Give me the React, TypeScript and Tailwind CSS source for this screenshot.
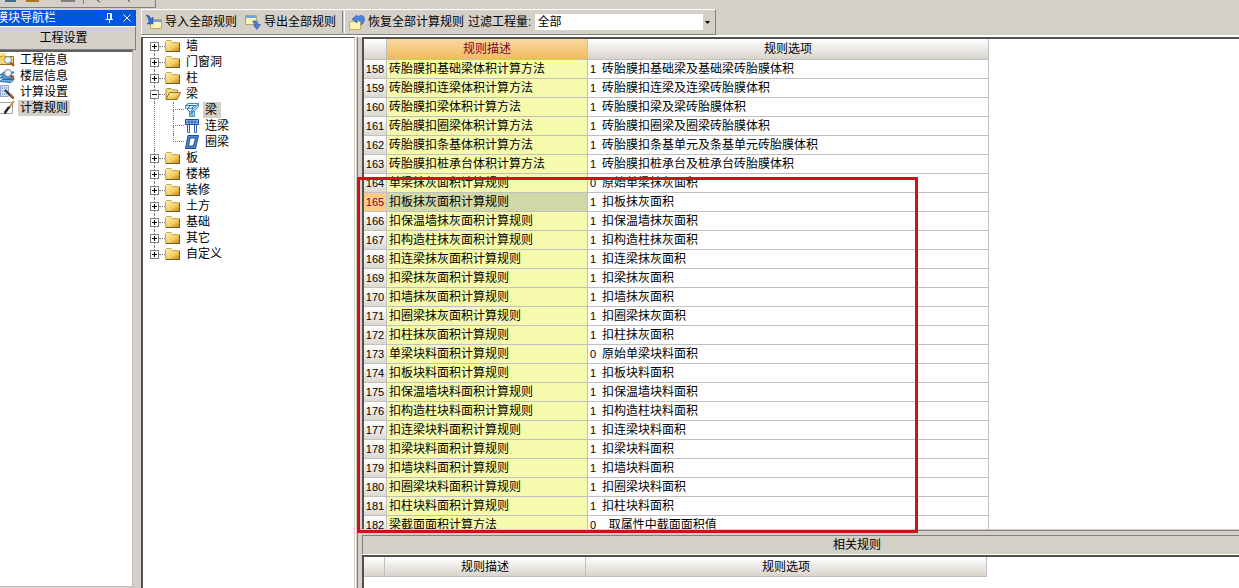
import React from 'react';

interface Rule {
  id: number;
  name: string;
  code: string;
  option: string;
}

interface TreeNode {
  label: string;
  open?: boolean;
}

const rules: Rule[] = [
  { id: 158, name: '砖胎膜扣基础梁体积计算方法', code: '1', option: '砖胎膜扣基础梁及基础梁砖胎膜体积' },
  { id: 159, name: '砖胎膜扣连梁体积计算方法', code: '1', option: '砖胎膜扣连梁及连梁砖胎膜体积' },
  { id: 160, name: '砖胎膜扣梁体积计算方法', code: '1', option: '砖胎膜扣梁及梁砖胎膜体积' },
  { id: 161, name: '砖胎膜扣圈梁体积计算方法', code: '1', option: '砖胎膜扣圈梁及圈梁砖胎膜体积' },
  { id: 162, name: '砖胎膜扣条基体积计算方法', code: '1', option: '砖胎膜扣条基单元及条基单元砖胎膜体积' },
  { id: 163, name: '砖胎膜扣桩承台体积计算方法', code: '1', option: '砖胎膜扣桩承台及桩承台砖胎膜体积' },
  { id: 164, name: '单梁抹灰面积计算规则', code: '0', option: '原始单梁抹灰面积' },
  { id: 165, name: '扣板抹灰面积计算规则', code: '1', option: '扣板抹灰面积' },
  { id: 166, name: '扣保温墙抹灰面积计算规则', code: '1', option: '扣保温墙抹灰面积' },
  { id: 167, name: '扣构造柱抹灰面积计算规则', code: '1', option: '扣构造柱抹灰面积' },
  { id: 168, name: '扣连梁抹灰面积计算规则', code: '1', option: '扣连梁抹灰面积' },
  { id: 169, name: '扣梁抹灰面积计算规则', code: '1', option: '扣梁抹灰面积' },
  { id: 170, name: '扣墙抹灰面积计算规则', code: '1', option: '扣墙抹灰面积' },
  { id: 171, name: '扣圈梁抹灰面积计算规则', code: '1', option: '扣圈梁抹灰面积' },
  { id: 172, name: '扣柱抹灰面积计算规则', code: '1', option: '扣柱抹灰面积' },
  { id: 173, name: '单梁块料面积计算规则', code: '0', option: '原始单梁块料面积' },
  { id: 174, name: '扣板块料面积计算规则', code: '1', option: '扣板块料面积' },
  { id: 175, name: '扣保温墙块料面积计算规则', code: '1', option: '扣保温墙块料面积' },
  { id: 176, name: '扣构造柱块料面积计算规则', code: '1', option: '扣构造柱块料面积' },
  { id: 177, name: '扣连梁块料面积计算规则', code: '1', option: '扣连梁块料面积' },
  { id: 178, name: '扣梁块料面积计算规则', code: '1', option: '扣梁块料面积' },
  { id: 179, name: '扣墙块料面积计算规则', code: '1', option: '扣墙块料面积' },
  { id: 180, name: '扣圈梁块料面积计算规则', code: '1', option: '扣圈梁块料面积' },
  { id: 181, name: '扣柱块料面积计算规则', code: '1', option: '扣柱块料面积' },
  { id: 182, name: '梁截面面积计算方法', code: '0', option: '  取属性中截面面积值' },
];

const tree: TreeNode[] = [
  { label: '墙' },
  { label: '门窗洞' },
  { label: '柱' },
  { label: '梁', open: true },
  { label: '板' },
  { label: '楼梯' },
  { label: '装修' },
  { label: '土方' },
  { label: '基础' },
  { label: '其它' },
  { label: '自定义' },
];

const selectedRule = 165;

const FolderIcon: React.FC<{ open?: boolean }> = ({ open }) => (
  <svg width="16" height="16" viewBox="0 0 16 16" className="shrink-0">
    <defs>
      <linearGradient id="folder" x1="0" y1="0" x2="1" y2="1">
        <stop offset="0" stopColor="#fff3b8" />
        <stop offset="0.6" stopColor="#f0ca5c" />
        <stop offset="1" stopColor="#c07f14" />
      </linearGradient>
    </defs>
    {open ? (
      <>
        <path d="M1 13V3.5L2 2.5H6L7.5 4H12.5V7" fill="#f7dc84" stroke="#b58a2a" />
        <path d="M1 13.5L4.5 6.5H15.5L12 13.5Z" fill="url(#folder)" stroke="#9a7020" />
      </>
    ) : (
      <>
        <path d="M0.5 13.5V3.5L1.5 2.5H6L7.5 4.5H14.5V13.5Z" fill="url(#folder)" stroke="#cfa848" />
        <path d="M1 13.5H15M14.5 5V14" stroke="#7d5a18" fill="none" />
      </>
    )}
  </svg>
);

const BeamIcon = () => (
  <svg width="16" height="16" viewBox="0 0 16 16" className="shrink-0">
    <path d="M1.5 3.5L4 1.5H14.5L12 4.5V6.5H1.5Z" fill="#e3f2fc" stroke="#3f8fc4" />
    <path d="M12 4.5L14.5 1.5V4.5L10.5 9V14.5H5.5V10Z" fill="#b9dcf2" stroke="#3f8fc4" />
    <path d="M1.5 3.5H12M4 6L7 3M8 6L11 3M3 7L6 10M8 8V14M6 12L10 9" stroke="#2f6fae" fill="none" />
  </svg>
);

const LinkBeamIcon = () => (
  <svg width="16" height="16" viewBox="0 0 16 16" className="shrink-0">
    <path d="M1.5 1.5H14.5V6.5H1.5Z" fill="#9cc0ee" stroke="#1d4c9e" />
    <path d="M5 2V6M8 2V6M11 2V6M2 4H14" stroke="#2c5fb5" />
    <path d="M3.5 7V14.5H5.5V7M10.5 7V14.5H12.5V7" fill="#fff" stroke="#2c62b0" />
  </svg>
);

const RingBeamIcon = () => (
  <svg width="16" height="16" viewBox="0 0 16 16" className="shrink-0">
    <path d="M4 1.5H14.5L11.5 14.5H1.5Z" fill="#4d88d4" stroke="#1b4795" />
    <path d="M6 4H11.5L9.5 12H4.5Z" fill="#fff" stroke="#1b4795" />
  </svg>
);

const ImportIcon = () => (
  <svg width="16" height="16" viewBox="0 0 16 16" className="shrink-0">
    <path d="M5.5 5.5H15.5V14.5H4.5V8Z" fill="#fbf3b4" stroke="#b8a660" />
    <path d="M6 6H15V8H6Z" fill="#6fa4e0" />
    <path d="M0 1Q4 1 5 5L7 3V10H1L3 8Q3 4 0 1Z" fill="#3c6fd0" stroke="#1f4496" strokeWidth="0.5" />
  </svg>
);

const ExportIcon = () => (
  <svg width="16" height="16" viewBox="0 0 16 16" className="shrink-0">
    <path d="M0.5 1.5H11.5V10.5H0.5Z" fill="#fbf3b4" stroke="#a9a57c" />
    <path d="M1 2H11V4H1Z" fill="#6fa4e0" />
    <path d="M8 7Q13 6 13 10.5H15.5L12 15.5L8.500 11H10.500Q10.500 8.500 8 9Z" fill="#4a80da" stroke="#1f4496" strokeWidth="0.5" />
  </svg>
);

const RestoreIcon = () => (
  <svg width="16" height="16" viewBox="0 0 16 16" className="shrink-0">
    <path d="M0.5 7.5H11.5V15.5H0.5Z" fill="#fbf3b4" stroke="#c2b060" />
    <path d="M3 5L8 1V3Q15 -1 15.5 5Q15.5 9 12 11Q13.500 6 8 6V9Z" fill="#4a84dc" stroke="#2450a0" strokeWidth="0.5" />
  </svg>
);

const ProjectIcon = () => (
  <svg width="16" height="16" viewBox="0 0 16 16" className="shrink-0">
    <path d="M0.500 4.500H14.500V12.500H0.500Z" fill="#f4d77a" stroke="#9a7020" />
    <path d="M4 0V9M0 4H8M1 1L7 7M7 1L1 7" stroke="#f3c43a" />
    <circle cx="9" cy="8" r="3.500" fill="#e6f3fc" stroke="#7d8ba0" />
    <path d="M11.500 10.500L15 14" stroke="#a0501c" strokeWidth="2" />
  </svg>
);

const FloorIcon = () => (
  <svg width="16" height="16" viewBox="0 0 16 16" className="shrink-0">
    <path d="M1 7L5 4H15L12 7ZM1 10L3 8H15L12 10.500ZM1 13.500L3 11.500H15L12 14.500Z" fill="#6aaee0" stroke="#2468ae" />
    <circle cx="9" cy="5" r="3.500" fill="#eef7fe" stroke="#7d8ba0" />
    <path d="M11.500 7.500L15 11" stroke="#a0501c" strokeWidth="2" />
  </svg>
);

const CalcIcon = () => (
  <svg width="16" height="16" viewBox="0 0 16 16" className="shrink-0">
    <path d="M1.500 1.500H9.500V12.500H1.500Z" fill="#cfe0f6" stroke="#8aa4cc" />
    <path d="M3 4H8M3 7H8M3 10H8" stroke="#4b7cc4" strokeDasharray="1 1" />
    <path d="M6 6L14.500 14.500" stroke="#2d2d2d" strokeWidth="2" />
    <path d="M11 10L14 13.500" stroke="#b45a20" strokeWidth="2" />
  </svg>
);

const RuleIcon = () => (
  <svg width="16" height="16" viewBox="0 0 16 16" className="shrink-0">
    <path d="M0.500 2.500H13.500V13.500H0.500Z" fill="#fff" stroke="#a0a0a0" />
    <path d="M15 1L10 8" stroke="#c79a30" strokeWidth="2" />
    <path d="M11 7L6 14L5.500 12L9 7Z" fill="#222" stroke="#222" />
  </svg>
);

const modules = [
  { label: '工程信息', icon: <ProjectIcon /> },
  { label: '楼层信息', icon: <FloorIcon /> },
  { label: '计算设置', icon: <CalcIcon /> },
  { label: '计算规则', icon: <RuleIcon />, active: true },
];

const beams = [
  { label: '梁', icon: <BeamIcon />, active: true },
  { label: '连梁', icon: <LinkBeamIcon /> },
  { label: '圈梁', icon: <RingBeamIcon /> },
];

const TopStrip = () => (
  <div className="flex h-2 w-[156px] shrink-0 items-start border-r border-b border-[#808080] pl-1">
    <svg width="150" height="4" viewBox="0 0 150 4">
      <path d="M1 0H12V2H1Z" fill="#3f6f8f" />
      <path d="M22 0H35V2H22Z" fill="#a9781c" />
      <path d="M57 0H71V2H57Z" fill="#808080" />
      <path d="M79.500 0V4" stroke="#808080" />
      <path d="M93 0L96 2M124 0L126 2" stroke="#404040" />
    </svg>
  </div>
);

const ModulePanel = () => (
  <aside className="flex w-[136px] shrink-0 flex-col pt-0.5">
    <div className="flex h-4 items-center bg-[#0055e0] text-white">
      <h1 className="-ml-1 flex-1 whitespace-nowrap">模块导航栏</h1>
      <button aria-label="固定" className="flex w-[18px] justify-center">
        <svg width="9" height="10" viewBox="0 0 9 10" fill="none" stroke="#fff">
          <path d="M2.500 6V0.500H6.500V6M5.500 1V6M0.500 6.500H8M4.500 7V10" />
        </svg>
      </button>
      <button aria-label="关闭" className="flex w-[18px] justify-center">
        <svg width="8" height="8" viewBox="0 0 8 8" stroke="#fff">
          <path d="M0.500 0.500L7.500 7.500M7.500 0.500L0.500 7.500" />
        </svg>
      </button>
    </div>
    <button className="h-6 border-t border-r border-b border-t-white border-r-[#808080] border-b-[#808080] pr-2">
      工程设置
    </button>
    <ul className="mr-[3px] mb-px flex-1 border-t-2 border-r border-b border-t-[#606060] border-r-[#c0c0c0] border-b-[#c0c0c0] bg-white">
      {modules.map((m) => (
        <li key={m.label} className="flex h-4 items-center gap-[3px]">
          <span className="-ml-px">{m.icon}</span>
          <a href="#" className={m.active ? 'bg-[#d4d0c8] px-0.5 leading-4' : 'px-0.5 leading-4'}>
            {m.label}
          </a>
        </li>
      ))}
    </ul>
  </aside>
);

const Toolbar = () => (
  <div className="flex h-[26px] w-[575px] shrink-0 items-center border border-t-white border-r-[#808080] border-b-[#808080] border-l-white pl-1">
    <button className="flex items-center gap-[3px] whitespace-nowrap">
      <ImportIcon />
      导入全部规则
    </button>
    <button className="ml-2 flex items-center gap-[3px] whitespace-nowrap">
      <ExportIcon />
      导出全部规则
    </button>
    <span className="mr-1 ml-1.5 h-[22px] w-[3px] border-r border-l border-r-white border-l-[#808080]" />
    <button className="flex items-center gap-[3px] whitespace-nowrap">
      <RestoreIcon />
      恢复全部计算规则
    </button>
    <label htmlFor="filter" className="ml-1 whitespace-nowrap">
      过滤工程量:
    </label>
    <div className="mr-[3px] ml-1 grid h-4 flex-1 items-center bg-white">
      <select id="filter" className="col-start-1 row-start-1 h-4 appearance-none bg-transparent pl-0.5 leading-4 outline-none">
        <option>全部</option>
      </select>
      <span className="pointer-events-none col-start-1 row-start-1 flex h-4 w-[9px] items-center justify-center justify-self-end bg-[#d4d0c8]">
        <svg width="5" height="3" viewBox="0 0 5 3">
          <path d="M0 0H5L2.500 3Z" fill="#000" />
        </svg>
      </span>
    </div>
  </div>
);

const RuleTree = () => (
  <nav className="w-[214px] shrink-0 border-t border-r border-l-2 border-t-[#505050] border-r-[#d4d0c8] border-l-[#505050] bg-white pl-[7px]">
    <ul>
      {tree.map((node, i) => (
        <li key={node.label}>
          <div className="flex h-4 items-center">
            <span className="flex h-4 w-[9px] flex-col items-center">
              <span className={i === 0 ? 'flex-1' : 'flex-1 border-l border-dotted border-[#808080]'} />
              <button aria-label={node.label} className="flex size-[9px] items-center justify-center border border-[#808080]">
                <svg width="5" height="5" viewBox="0 0 5 5" stroke="#000">
                  <path d={node.open ? 'M0 2.500H5' : 'M0 2.500H5M2.500 0V5'} />
                </svg>
              </button>
              <span className={i === tree.length - 1 ? 'flex-1' : 'flex-1 border-l border-dotted border-[#808080]'} />
            </span>
            <span className="w-1.5 border-t border-dotted border-[#808080]" />
            <FolderIcon open={node.open} />
            <span className="ml-[5px] leading-4">{node.label}</span>
          </div>
          {node.open && (
            <ul className="ml-1 border-l border-dotted border-[#808080] pl-[18px]">
              {beams.map((b, j) => (
                <li key={b.label} className="flex h-4 items-center">
                  <span className="flex h-4 w-[11px] flex-col">
                    <span className="h-2 border-b border-l border-dotted border-[#808080]" />
                    <span className={j === beams.length - 1 ? 'h-2' : 'h-2 border-l border-dotted border-[#808080]'} />
                  </span>
                  {b.icon}
                  <a href="#" className={b.active ? 'ml-[3px] bg-[#d4d0c8] pr-1 pl-0.5 leading-4' : 'ml-[3px] px-0.5 leading-4'}>
                    {b.label}
                  </a>
                </li>
              ))}
            </ul>
          )}
        </li>
      ))}
    </ul>
  </nav>
);

const headCell = 'border-r border-b border-[#c0c0c0] bg-linear-to-b from-white to-[#d8d4cc] p-0 font-normal';

const RuleTable = () => (
  <div className="min-h-0 flex-1 overflow-hidden border-t-2 border-l-2 border-[#505050] bg-white">
    <table className="w-[625px] table-fixed border-separate border-spacing-0">
      <colgroup>
        <col className="w-[23px]" />
        <col className="w-[201px]" />
        <col className="w-[401px]" />
      </colgroup>
      <thead>
        <tr className="h-[21px]">
          <th className={headCell} />
          <th className="border-r border-b border-[#c0c0c0] bg-linear-to-b from-[#f8d8a0] to-[#f0bc5c] p-0 font-normal text-[#800030]">
            规则描述
          </th>
          <th className={headCell}>规则选项</th>
        </tr>
      </thead>
      <tbody>
        {rules.map((rule) => {
          const selected = rule.id === selectedRule;
          return (
            <tr key={rule.id} className="h-[19px] whitespace-nowrap">
              <td
                className={
                  selected
                    ? 'border-r border-b border-[#c0c0c0] bg-[#ffcc88] p-0 text-center text-[11px] leading-[18px] text-[#800030]'
                    : 'border-r border-b border-[#c0c0c0] bg-linear-to-b from-white to-[#dcd8d0] p-0 text-center text-[11px] leading-[18px]'
                }
              >
                {rule.id}
              </td>
              <td
                className={
                  selected
                    ? 'border-r border-b border-[#c0c0c0] bg-[#d0d8a8] p-0 pl-0.5 leading-[18px]'
                    : 'border-r border-b border-[#c0c0c0] bg-[#f6faac] p-0 pl-0.5 leading-[18px]'
                }
              >
                {rule.name}
              </td>
              <td className="border-r border-b border-[#c0c0c0] p-0 pl-0.5 leading-[18px] whitespace-pre">
                <span className="inline-block w-3 text-[11px]">{rule.code}</span>
                {rule.option}
              </td>
            </tr>
          );
        })}
      </tbody>
    </table>
  </div>
);

const RelatedRules = () => (
  <section className="shrink-0">
    <h2 className="mt-1 flex h-5 items-center justify-center border-t border-b border-l border-t-[#808080] border-b-white border-l-[#808080] pl-28">
      相关规则
    </h2>
    <div className="h-[33px] border-t-2 border-l-2 border-[#505050] bg-white">
      <table className="w-[623px] table-fixed border-separate border-spacing-0">
        <colgroup>
          <col className="w-[21px]" />
          <col className="w-[201px]" />
          <col className="w-[401px]" />
        </colgroup>
        <thead>
          <tr className="h-5">
            <th className={headCell} />
            <th className={headCell}>规则描述</th>
            <th className={headCell}>规则选项</th>
          </tr>
        </thead>
      </table>
    </div>
  </section>
);

export default function App() {
  return (
    <div className="flex h-screen flex-col overflow-hidden bg-[#d4d0c8] font-['Liberation_Sans','Noto_Sans_CJK_SC',sans-serif] text-xs leading-4 text-black">
      <TopStrip />
      <div className="flex min-h-0 flex-1">
        <ModulePanel />
        <div className="ml-[5px] flex min-w-0 flex-1 flex-col pt-px">
          <Toolbar />
          <div className="relative flex min-h-0 flex-1 border-t-2 border-white">
            <RuleTree />
            <div className="mr-1 w-[3px] shrink-0 border-r border-l border-r-[#808080] border-l-white" />
            <main className="flex min-w-0 flex-1 flex-col">
              <RuleTable />
              <div className="h-0.5 shrink-0 border-b border-[#808080]" />
              <RelatedRules />
            </main>
            <div className="pointer-events-none absolute top-[140px] left-[216px] h-[356px] w-[561px] border-[3px] border-[#cc1418]" />
          </div>
        </div>
      </div>
    </div>
  );
}
